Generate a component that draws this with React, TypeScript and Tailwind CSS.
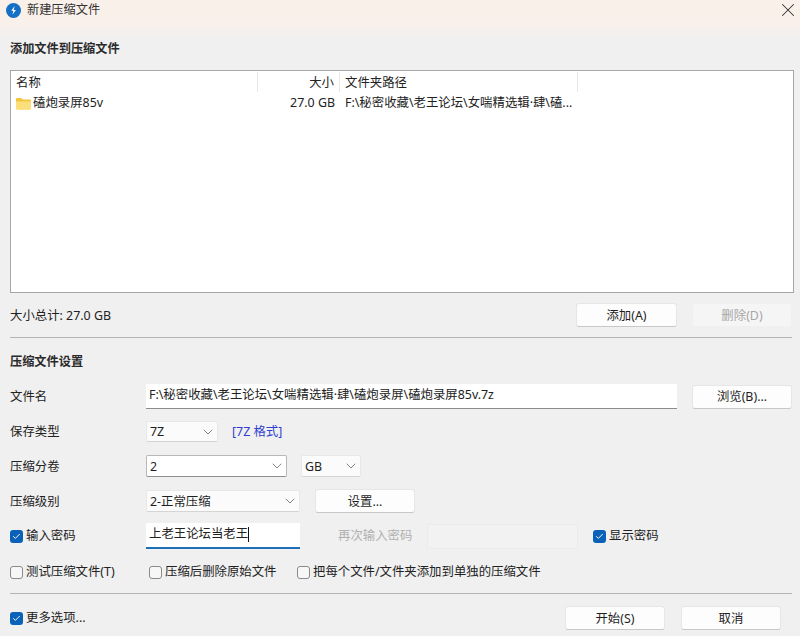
import { ChevronDown, X, Check } from "lucide-react";

const font = "font-['Noto_Sans','Noto_Sans_CJK_SC',sans-serif]";

function Btn({ label, width = "w-[100px]", height = "h-[24px]", disabled = false }: { label: string; width?: string; height?: string; disabled?: boolean }) {
  return (
    <div
      className={
        disabled
          ? `${width} ${height} flex items-center justify-center rounded-[3px] border border-[#f0f0f0] bg-[#f5f5f5] pt-[1px] text-[#a6a6a6]`
          : `${width} ${height} flex items-center justify-center rounded-[3px] border border-[#e6e6e6] border-b-[#c8c8c8] bg-[#fdfdfd] pt-[1px] text-[#1f1f1f]`
      }
    >
      {label}
    </div>
  );
}

function Select({ value, width, height, focused = false }: { value: string; width: string; height: string; focused?: boolean }) {
  return (
    <div
      className={
        focused
          ? `${width} ${height} flex items-center justify-between rounded-[2px] border border-[#b8b8b8] border-b-[#8f8f8f] bg-white pl-[3px] pr-[1px] text-[#1f1f1f]`
          : `${width} ${height} flex items-center justify-between rounded-[2px] border border-[#e8e8e8] border-b-[#d4d4d4] bg-[#fbfbfb] pl-[3px] pr-[1px] text-[#1f1f1f]`
      }
    >
      <span className="pt-[1px]">{value}</span>
      <ChevronDown className="h-[16px] w-[16px] text-[#666666]" strokeWidth={1.2} />
    </div>
  );
}

function CheckBox({ label, checked = false, className = "" }: { label: string; checked?: boolean; className?: string }) {
  return (
    <div className={`flex items-center gap-[3px] ${className}`}>
      {checked ? (
        <span className="flex h-[13px] w-[13px] items-center justify-center rounded-[3px] bg-[#0a62b8]">
          <Check className="h-[9px] w-[9px] text-white" strokeWidth={2.5} />
        </span>
      ) : (
        <span className="h-[13px] w-[13px] rounded-[3px] border border-[#8a8a8a] bg-[#f7f7f7]" />
      )}
      <span className="text-[#222222]">{label}</span>
    </div>
  );
}

function Row({ label, children, className = "" }: { label: string; children: React.ReactNode; className?: string }) {
  return (
    <div className={`flex items-center pl-[10px] ${className}`}>
      <div className="w-[136px] pt-[1px] text-[#222222]">{label}</div>
      {children}
    </div>
  );
}

export default function App() {
  return (
    <div className={`${font} h-[636px] w-[800px] overflow-hidden bg-[#f0f0f0] text-[12.4px] leading-[18px] text-[#222222]`}>
      {/* Title bar */}
      <div className="flex h-[40px] items-start justify-between bg-linear-to-b from-[#faf0ea] from-50% to-[#f0f0f0] pl-[6px] pr-[1px]">
        <div className="flex items-start gap-[6px]">
          <svg width="15" height="15" viewBox="0 0 16 16" className="mt-[3px]">
            <circle cx="8" cy="8" r="8" fill="#1470c4" />
            <path d="M9.2 3.2 5.6 8.2h2.3L6.8 12.6l3.8-5.2H8.2z" fill="#ffffff" />
          </svg>
          <span className="mt-[1px] text-[12.2px] text-[#333333]">新建压缩文件</span>
        </div>
        <X className="-mt-[1px] h-[22px] w-[22px] text-[#333333]" strokeWidth={1.1} />
      </div>

      <div className="h-[18px] pl-[10px] text-[12.2px] font-bold text-[#2a2a2a]">添加文件到压缩文件</div>

      {/* File list */}
      <div className="ml-[10px] mt-[12px] h-[223px] w-[784px] border border-[#a6a6a6] bg-white">
        <div className="flex h-[21px] pt-[1px]">
          <div className="flex h-full w-[247px] items-center border-r border-[#e8e8e8] pl-[5px] pt-[2px]">名称</div>
          <div className="flex h-full w-[82px] items-center justify-end border-r border-[#e8e8e8] pr-[5px] pt-[2px]">大小</div>
          <div className="flex h-full w-[238px] items-center border-r border-[#e8e8e8] pl-[5px] pt-[2px]">文件夹路径</div>
        </div>
        <div className="flex h-[20px] items-center pt-[2px]">
          <div className="flex w-[247px] items-center gap-[2px] pl-[5px]">
            <svg width="15" height="13" viewBox="0 0 15 13">
              <path d="M0 2.2C0 1.5.5 1 1.2 1h3.6c.4 0 .7.2 1 .5L7 2.6h6.8c.7 0 1.2.5 1.2 1.2v7.4c0 .7-.5 1.2-1.2 1.2H1.2C.5 12.4 0 11.9 0 11.2z" fill="#f3c63f" />
              <path d="M0 4.4h15v6.8c0 .7-.5 1.2-1.2 1.2H1.2C.5 12.4 0 11.9 0 11.2z" fill="#fbdf7c" />
            </svg>
            <span>磕炮录屏85v</span>
          </div>
          <div className="w-[82px] pr-[5px] text-right">27.0 GB</div>
          <div className="w-[238px] truncate pl-[5px]">F:\秘密收藏\老王论坛\女喘精选辑·肆\磕...</div>
        </div>
      </div>

      {/* Totals */}
      <div className="mt-[10px] flex h-[24px] items-center pl-[10px]">
        <div className="w-[566px] pt-[1px]">大小总计: 27.0 GB</div>
        <Btn label="添加(A)" width="w-[101px]" />
        <div className="ml-[15px]">
          <Btn label="删除(D)" disabled />
        </div>
      </div>

      <div className="ml-[10px] mt-[10px] h-px w-[782px] bg-[#b4b4b4]" />

      <div className="mt-[15px] h-[18px] pl-[10px] text-[12.2px] font-bold text-[#2a2a2a]">压缩文件设置</div>

      {/* Settings */}
      <Row label="文件名" className="mt-[13px] h-[25px]">
        <div className="flex h-[25px] w-[531px] items-center border-b border-[#8c8c8c] bg-white pb-[3px] pl-[3px]">F:\秘密收藏\老王论坛\女喘精选辑·肆\磕炮录屏\磕炮录屏85v.7z</div>
        <div className="ml-[15px]">
          <Btn label="浏览(B)..." />
        </div>
      </Row>

      <Row label="保存类型" className="mt-[12px] h-[21px]">
        <Select value="7Z" width="w-[72px]" height="h-[21px]" />
        <span className="ml-[14px] pt-[1px] text-[#2f3fd0]">[7Z 格式]</span>
      </Row>

      <Row label="压缩分卷" className="mt-[13px] h-[22px]">
        <Select value="2" width="w-[141px]" height="h-[22px]" focused />
        <div className="ml-[14px]">
          <Select value="GB" width="w-[60px]" height="h-[22px]" />
        </div>
      </Row>

      <Row label="压缩级别" className="mt-[12px] h-[24px]">
        <Select value="2-正常压缩" width="w-[154px]" height="h-[22px]" />
        <div className="ml-[15px]">
          <Btn label="设置..." />
        </div>
      </Row>

      <div className="mt-[10px] flex h-[26px] items-center pl-[10px]">
        <CheckBox label="输入密码" checked className="w-[136px]" />
        <div className="flex h-[26px] w-[154px] items-center border-b-2 border-[#1f6fb8] bg-white pb-[2px] pl-[3px]">
          上老王论坛当老王
          <span className="h-[15px] w-px bg-[#111111]" />
        </div>
        <span className="ml-[38px] w-[89px] text-[#b0b0b0]">再次输入密码</span>
        <div className="h-[25px] w-[151px] border border-[#ebebeb] bg-[#f2f2f2]" />
        <CheckBox label="显示密码" checked className="ml-[15px]" />
      </div>

      <div className="mt-[14px] flex h-[18px] items-center pl-[10px]">
        <CheckBox label="测试压缩文件(T)" className="w-[139px]" />
        <CheckBox label="压缩后删除原始文件" className="w-[148px]" />
        <CheckBox label="把每个文件/文件夹添加到单独的压缩文件" />
      </div>

      <div className="ml-[10px] mt-[12px] h-px w-[782px] bg-[#b4b4b4]" />

      {/* Footer */}
      <div className="mt-[12px] flex h-[24px] items-center pl-[10px]">
        <CheckBox label="更多选项..." checked className="w-[555px]" />
        <Btn label="开始(S)" />
        <div className="ml-[16px]">
          <Btn label="取消" />
        </div>
      </div>
    </div>
  );
}
